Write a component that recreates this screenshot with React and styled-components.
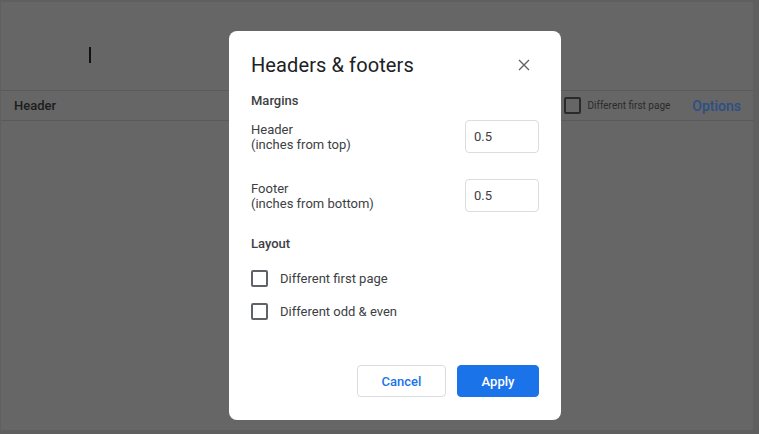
import React from "react";
import styled, { createGlobalStyle } from "styled-components";

const Global = createGlobalStyle`
  html, body { margin: 0; padding: 0; }
  body { font-family: Roboto, "Liberation Sans", Arial, sans-serif; background: #5f5f5f; }
`;

const Screen = styled.div`
  position: relative;
  width: 759px;
  height: 434px;
  overflow: hidden;
  background: #5f5f5f;
  display: flex;
  padding: 2px 6px 4px 1px;
  box-sizing: border-box;
`;

const Page = styled.div`
  flex: 1;
  background: #666666;
  display: flex;
  flex-direction: column;
`;

const Body = styled.div`
  height: 88px;
  box-sizing: border-box;
  padding: 45px 0 0 88px;
`;

const Cursor = styled.div`
  width: 2px;
  height: 16px;
  background: #111;
`;

const HeaderBar = styled.div`
  height: 29px;
  border-top: 1px solid #5a5a5a;
  border-bottom: 1px solid #5a5a5a;
  display: flex;
  align-items: center;
  padding: 0 12px 0 13px;
`;

const HeaderLabel = styled.span`
  font-size: 13px;
  font-weight: 500;
  color: #1c1c1c;
  flex: 1;
`;

const SmallCheck = styled.span`
  width: 13px;
  height: 13px;
  border: 2px solid #2a2a2a;
  border-radius: 2px;
  margin-right: 6px;
`;

const SmallText = styled.span`
  font-size: 10px;
  color: #2a2a2a;
  margin-right: 22px;
`;

const OptionsLink = styled.span`
  font-size: 14px;
  font-weight: 500;
  color: #2d4f85;
`;

const Dialog = styled.div`
  position: absolute;
  left: 229px;
  top: 31px;
  width: 332px;
  height: 389px;
  box-sizing: border-box;
  background: #fff;
  border-radius: 8px;
  padding: 18px 22px 23px 22px;
  display: flex;
  flex-direction: column;
  color: #3c4043;
`;

const TitleRow = styled.div`
  display: flex;
  align-items: center;
  justify-content: space-between;
  height: 32px;
  margin-bottom: 12px;
`;

const Title = styled.h2`
  margin: 0;
  font-size: 20px;
  font-weight: 400;
  color: #202124;
  letter-spacing: 0.1px;
`;

const CloseButton = styled.button`
  border: none;
  background: none;
  padding: 0;
  margin-right: 9px;
  width: 12px;
  height: 12px;
  display: flex;
  cursor: pointer;
`;

const SectionTitle = styled.div`
  font-size: 13px;
  font-weight: 500;
  color: #3c4043;
  line-height: 16px;
  margin-bottom: ${(p) => p.$gap}px;
`;

const FieldRow = styled.div`
  display: flex;
  align-items: center;
  justify-content: space-between;
  height: 33px;
  margin-bottom: ${(p) => p.$gap}px;
`;

const FieldLabel = styled.div`
  font-size: 13px;
  line-height: 15px;
  color: #3c4043;
`;

const NumberInput = styled.input`
  width: 74px;
  height: 33px;
  box-sizing: border-box;
  border: 1px solid #dadce0;
  border-radius: 4px;
  padding: 0 8px;
  font-family: Roboto, "Liberation Sans", Arial, sans-serif;
  font-size: 13px;
  color: #3c4043;
  outline: none;
`;

const CheckRow = styled.label`
  display: flex;
  align-items: center;
  height: 17px;
  margin-bottom: ${(p) => p.$gap}px;
  cursor: pointer;
`;

const Box = styled.span`
  width: 17px;
  height: 17px;
  box-sizing: border-box;
  border: 2px solid #5f6368;
  border-radius: 2px;
  margin-right: 12px;
`;

const CheckText = styled.span`
  font-size: 13px;
  color: #3c4043;
`;

const Footer = styled.div`
  margin-top: auto;
  display: flex;
  justify-content: flex-end;
  gap: 11px;
`;

const Button = styled.button`
  height: 32px;
  width: ${(p) => p.$w}px;
  box-sizing: border-box;
  border-radius: 4px;
  font-family: Roboto, "Liberation Sans", Arial, sans-serif;
  font-size: 13px;
  font-weight: 500;
  cursor: pointer;
  border: 1px solid ${(p) => (p.$primary ? "#1a73e8" : "#dadce0")};
  background: ${(p) => (p.$primary ? "#1a73e8" : "#fff")};
  color: ${(p) => (p.$primary ? "#fff" : "#1a73e8")};
`;

export default function App() {
  return (
    <>
      <Global />
      <Screen>
        <Page>
          <Body>
            <Cursor />
          </Body>
          <HeaderBar>
            <HeaderLabel>Header</HeaderLabel>
            <SmallCheck />
            <SmallText>Different first page</SmallText>
            <OptionsLink>Options</OptionsLink>
          </HeaderBar>
        </Page>
        <Dialog>
          <TitleRow>
            <Title>Headers &amp; footers</Title>
            <CloseButton aria-label="Close">
              <svg width="12" height="12" viewBox="0 0 12 12">
                <path d="M1 1 L11 11 M11 1 L1 11" stroke="#5f6368" strokeWidth="1.4" />
              </svg>
            </CloseButton>
          </TitleRow>
          <SectionTitle $gap={11}>Margins</SectionTitle>
          <FieldRow $gap={26}>
            <FieldLabel>
              Header
              <br />
              (inches from top)
            </FieldLabel>
            <NumberInput defaultValue="0.5" />
          </FieldRow>
          <FieldRow $gap={24}>
            <FieldLabel>
              Footer
              <br />
              (inches from bottom)
            </FieldLabel>
            <NumberInput defaultValue="0.5" />
          </FieldRow>
          <SectionTitle $gap={18}>Layout</SectionTitle>
          <CheckRow $gap={16}>
            <Box />
            <CheckText>Different first page</CheckText>
          </CheckRow>
          <CheckRow $gap={0}>
            <Box />
            <CheckText>Different odd &amp; even</CheckText>
          </CheckRow>
          <Footer>
            <Button $w={89}>Cancel</Button>
            <Button $w={82} $primary>
              Apply
            </Button>
          </Footer>
        </Dialog>
      </Screen>
    </>
  );
}
